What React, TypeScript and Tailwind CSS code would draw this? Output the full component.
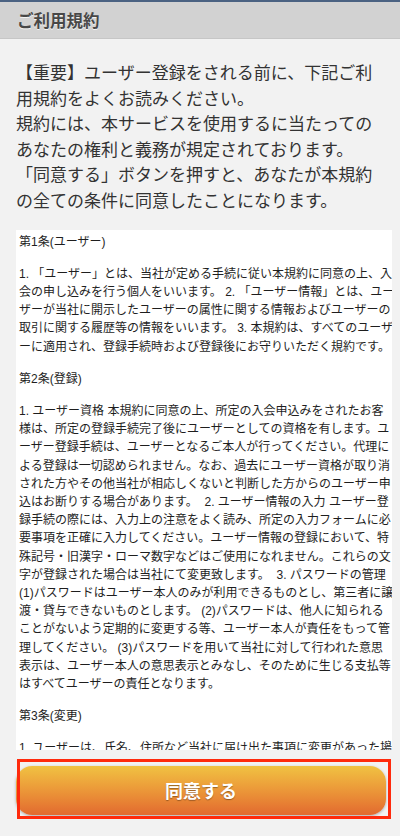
import React from "react";

const art1 = [
  "1. 「ユーザー」とは、当社が定める手続に従い本規約に同意の上、入",
  "会の申し込みを行う個人をいいます。 2. 「ユーザー情報」とは、ユー",
  "ザーが当社に開示したユーザーの属性に関する情報およびユーザーの",
  "取引に関する履歴等の情報をいいます。 3. 本規約は、すべてのユーザ",
  "ーに適用され、登録手続時および登録後にお守りいただく規約です。",
];

const art2 = [
  "1. ユーザー資格 本規約に同意の上、所定の入会申込みをされたお客",
  "様は、所定の登録手続完了後にユーザーとしての資格を有します。ユ",
  "ーザー登録手続は、ユーザーとなるご本人が行ってください。代理に",
  "よる登録は一切認められません。なお、過去にユーザー資格が取り消",
  "された方やその他当社が相応しくないと判断した方からのユーザー申",
  "込はお断りする場合があります。  2. ユーザー情報の入力 ユーザー登",
  "録手続の際には、入力上の注意をよく読み、所定の入力フォームに必",
  "要事項を正確に入力してください。ユーザー情報の登録において、特",
  "殊記号・旧漢字・ローマ数字などはご使用になれません。これらの文",
  "字が登録された場合は当社にて変更致します。  3. パスワードの管理",
  "(1)パスワードはユーザー本人のみが利用できるものとし、第三者に譲",
  "渡・貸与できないものとします。 (2)パスワードは、他人に知られる",
  "ことがないよう定期的に変更する等、ユーザー本人が責任をもって管",
  "理してください。 (3)パスワードを用いて当社に対して行われた意思",
  "表示は、ユーザー本人の意思表示とみなし、そのために生じる支払等",
  "はすべてユーザーの責任となります。",
];

const art3 = [
  "1. ユーザーは、氏名、住所など当社に届け出た事項に変更があった場",
  "合には、速やかに当社に連絡するものとします。",
];

function Lines({ lines }: { lines: string[] }) {
  return (
    <div className="mb-[14px]">
      {lines.map((l, i) => (
        <span key={i} className="block whitespace-pre">
          {l}
        </span>
      ))}
    </div>
  );
}

export default function App() {
  return (
    <div className="w-[400px] h-[836px] bg-[#f2f2f2] flex flex-col overflow-hidden font-['Noto_Sans_CJK_JP',sans-serif]">
      <div className="h-[2px] bg-[#4b6282]" />
      <header className="h-[37px] bg-[#d2d2d2] border-b border-[#c6c6c6] flex items-center px-[17px]">
        <h1 className="text-[16.5px] font-bold text-[#474747] leading-none [text-shadow:0_1px_0_#f4f4f4]">
          ご利用規約
        </h1>
      </header>

      <div className="pl-4 pt-[20px] w-[384px]">
        <p className="text-[17px] leading-[25.6px] text-[#333]">
          【重要】ユーザー登録をされる前に、下記ご利用規約をよくお読みください。
          <br />
          規約には、本サービスを使用するに当たってのあなたの権利と義務が規定されております。
          <br />
          「同意する」ボタンを押すと、あなたが本規約の全ての条件に同意したことになります。
        </p>
      </div>

      <div className="relative mt-[17px] ml-4 w-[376px] h-[520px] bg-white overflow-hidden shrink-0">
        <div className="pl-[3px] pt-[3px] text-[12px] leading-[18.2px] text-[#1e1e1e] font-['Liberation_Sans','Noto_Sans_CJK_JP',sans-serif]">
          <Lines lines={["第1条(ユーザー)"]} />
          <Lines lines={art1} />
          <Lines lines={["第2条(登録)"]} />
          <Lines lines={art2} />
          <Lines lines={["第3条(変更)"]} />
          <Lines lines={art3} />
        </div>
        <svg
          className="absolute right-[2px] bottom-[3px]"
          width="8"
          height="8"
          viewBox="0 0 8 8"
        >
          <path d="M1 7 L7 1 M4 7 L7 4" stroke="#b5b5b5" strokeWidth="0.8" fill="none" />
        </svg>
      </div>

      <div className="relative mt-[16px] ml-4">
        <button className="w-[370px] h-[49px] rounded-[16px] bg-gradient-to-b from-[#f0c242] to-[#e2692f] shadow-[0_1px_3px_rgba(0,0,0,0.3)] flex items-center justify-center">
          <span className="text-[18px] font-bold text-white [text-shadow:0_1px_1px_rgba(0,0,0,0.35)]">
            同意する
          </span>
        </button>
        <div className="absolute left-[1px] top-[-7px] w-[374px] h-[60px] border-[3px] border-[#ff2a0c] pointer-events-none" />
      </div>
    </div>
  );
}
